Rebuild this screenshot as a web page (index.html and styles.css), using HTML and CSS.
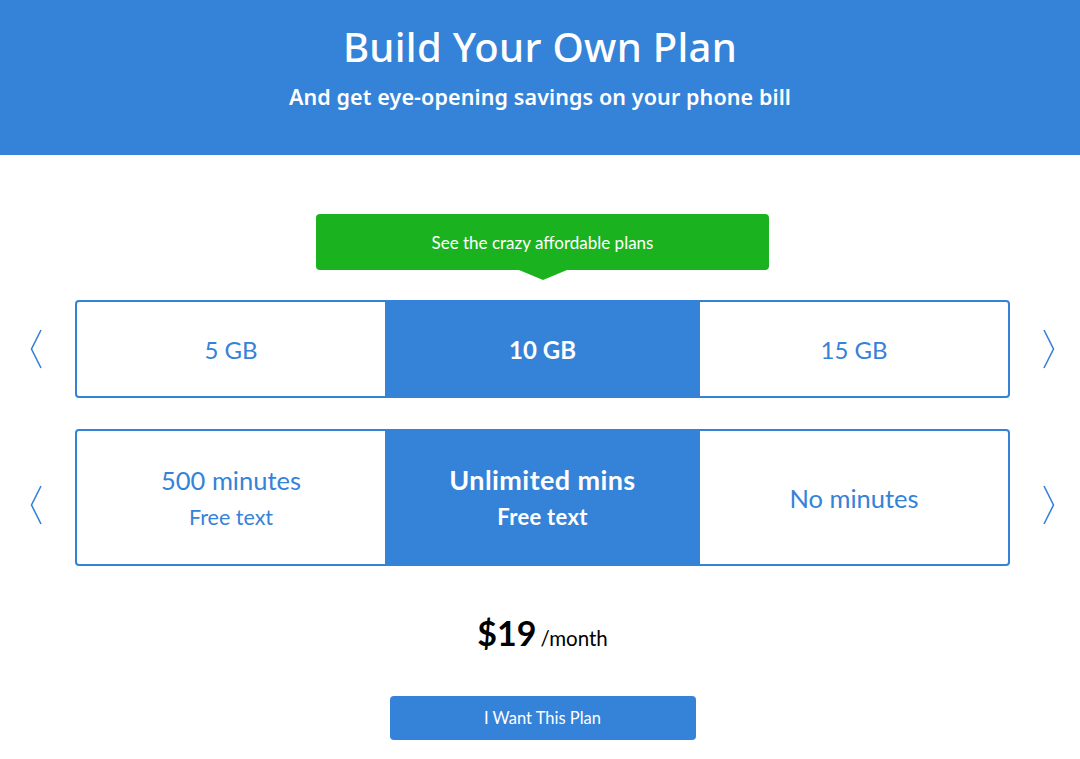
FILE: index.html
```html
<!DOCTYPE html>
<html>
<head>
<meta charset="utf-8">
<link rel="stylesheet" href="styles.css">
</head>
<body>
<header class="hero">
  <h1 class="hero-title">Build Your Own Plan</h1>
  <p class="hero-sub">And get eye-opening savings on your phone bill</p>
</header>
<main class="builder">
  <div class="tip">See the crazy affordable plans</div>
  <div class="row">
    <button class="arrow"><svg width="12" height="40" viewBox="0 0 12 40"><polyline points="11,1 1.5,20 11,39" fill="none" stroke="#3582d9" stroke-width="1.6"/></svg></button>
    <div class="box box-data">
      <div class="cell">5 GB</div>
      <div class="cell active">10 GB</div>
      <div class="cell">15 GB</div>
    </div>
    <button class="arrow"><svg width="12" height="40" viewBox="0 0 12 40"><polyline points="1,1 10.5,20 1,39" fill="none" stroke="#3582d9" stroke-width="1.6"/></svg></button>
  </div>
  <div class="row row-mins">
    <button class="arrow"><svg width="12" height="40" viewBox="0 0 12 40"><polyline points="11,1 1.5,20 11,39" fill="none" stroke="#3582d9" stroke-width="1.6"/></svg></button>
    <div class="box box-mins">
      <div class="cell"><span class="main">500 minutes</span><span class="sub">Free text</span></div>
      <div class="cell active"><span class="main">Unlimited mins</span><span class="sub">Free text</span></div>
      <div class="cell"><span class="main">No minutes</span></div>
    </div>
    <button class="arrow"><svg width="12" height="40" viewBox="0 0 12 40"><polyline points="1,1 10.5,20 1,39" fill="none" stroke="#3582d9" stroke-width="1.6"/></svg></button>
  </div>
  <div class="price"><span class="amount">$19</span><span class="per">/month</span></div>
  <button class="cta">I Want This Plan</button>
</main>
</body>
</html>
```

FILE: styles.css
```css
* { box-sizing: border-box; }
html, body { margin: 0; padding: 0; background: #fff; }
body { font-family: Lato, "Open Sans", sans-serif; color: #000; }

.hero {
  background: #3582d9;
  height: 155px;
  padding-top: 24px;
  text-align: center;
  color: #fff;
}
.hero-title {
  margin: 0;
  font-family: "Noto Sans", "Open Sans", sans-serif;
  font-weight: 500;
  font-size: 40px;
  line-height: 46px;
  letter-spacing: 0.3px;
}
.hero-sub {
  margin: 13px 0 0;
  font-family: "Noto Sans", "Open Sans", sans-serif;
  font-weight: 600;
  font-size: 21.5px;
  line-height: 28px;
  letter-spacing: 0.1px;
}

.builder {
  display: flex;
  flex-direction: column;
  align-items: center;
  padding: 59px 0 0 5px;
}

.tip {
  position: relative;
  width: 453px;
  height: 56px;
  background: #1bb21f;
  border-radius: 4px;
  color: #fff;
  font-size: 17px;
  display: flex;
  align-items: center;
  justify-content: center;
}
.tip::after {
  content: "";
  position: absolute;
  left: 50%;
  bottom: -10px;
  margin-left: -24px;
  border-left: 24px solid transparent;
  border-right: 24px solid transparent;
  border-top: 10px solid #1bb21f;
}

.row {
  display: flex;
  align-items: center;
  gap: 33px;
  margin-top: 30px;
}
.row-mins { margin-top: 31px; }

.arrow {
  background: none;
  border: 0;
  padding: 0;
  width: 12px;
  display: flex;
}
.row-mins .arrow { margin-top: 14px; }

.box {
  width: 935px;
  border: 2px solid #3582d9;
  border-radius: 4px;
  display: grid;
  grid-template-columns: 308px 315px 308px;
  overflow: hidden;
}
.box-data { height: 98px; }
.box-mins { height: 137px; }

.cell {
  display: flex;
  flex-direction: column;
  align-items: center;
  justify-content: center;
  color: #3582d9;
  font-size: 24px;
}
.cell.active {
  background: #3582d9;
  color: #fff;
  font-weight: 700;
}
.main { font-size: 25.5px; line-height: 30px; }
.sub { font-size: 21.5px; line-height: 26px; margin-top: 9px; }
.cell.active .main { font-size: 27px; letter-spacing: 0.4px; }
.cell.active .sub { font-size: 22px; letter-spacing: 0.3px; }

.price {
  margin-top: 47px;
  height: 40px;
  display: flex;
  align-items: baseline;
  gap: 4px;
  line-height: 40px;
}
.amount { font-size: 34px; font-weight: 700; }
.per { font-size: 20.5px; }

.cta {
  margin-top: 43px;
  width: 306px;
  height: 44px;
  border: 0;
  border-radius: 4px;
  background: #3582d9;
  color: #fff;
  font-family: Lato, "Open Sans", sans-serif;
  font-size: 16.5px;
}
```
